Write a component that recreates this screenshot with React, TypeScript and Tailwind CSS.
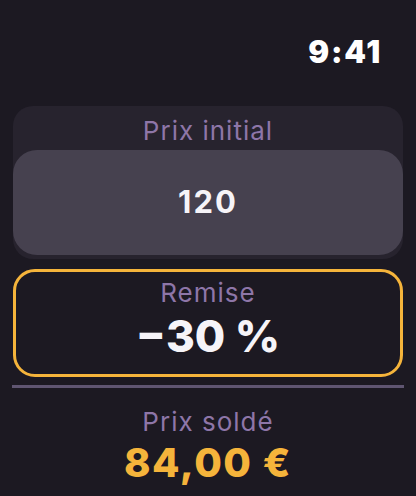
export default function App() {
  return (
    <div
      className="w-[416px] h-[496px] overflow-hidden bg-[#1c1922] text-white"
      style={{ fontFamily: "Inter, 'Noto Sans', sans-serif" }}
    >
      {/* status bar */}
      <div className="flex justify-end pt-[36px] pr-[34px] h-[106px]">
        <span className="text-[31px] leading-[31px] font-black tracking-[1.8px]">9:41</span>
      </div>

      <div className="mx-[13px] flex flex-col">
        {/* prix initial */}
        <div className="rounded-[20px] bg-[#27232e] pb-[4px]">
          <div className="h-[44px] pt-[5px] flex items-center justify-center text-[26px] leading-[30px] text-[#8e76a8] tracking-[1px]">
            Prix initial
          </div>
          <div className="h-[105px] rounded-[24px] bg-[#46414f] flex items-center justify-center">
            <span className="text-[31px] font-bold tracking-[2px] text-[#f6f4f8]">120</span>
          </div>
        </div>

        {/* remise */}
        <div className="mt-[10px] h-[108px] rounded-[22px] border-[3px] border-[#f5b43b] flex flex-col items-center">
          <div className="mt-[6px] text-[26px] leading-[30px] text-[#8e76a8] tracking-[1px]">Remise</div>
          <div className="mt-[4px] text-[44px] leading-[48px] font-extrabold text-[#f6f4f8]">
            −30 %
          </div>
        </div>

        {/* divider */}
        <div className="mt-[8px] h-[3px] -mx-[1px] bg-[#5f5571]"></div>

        {/* prix soldé */}
        <div className="flex flex-col items-center">
          <div className="mt-[19px] text-[26px] leading-[30px] text-[#8e76a8] tracking-[1px]">Prix soldé</div>
          <div className="mt-[4px] text-[40px] leading-[44px] font-extrabold text-[#f5b43b] tracking-[1.5px]">84,00 €</div>
        </div>
      </div>
    </div>
  );
}
